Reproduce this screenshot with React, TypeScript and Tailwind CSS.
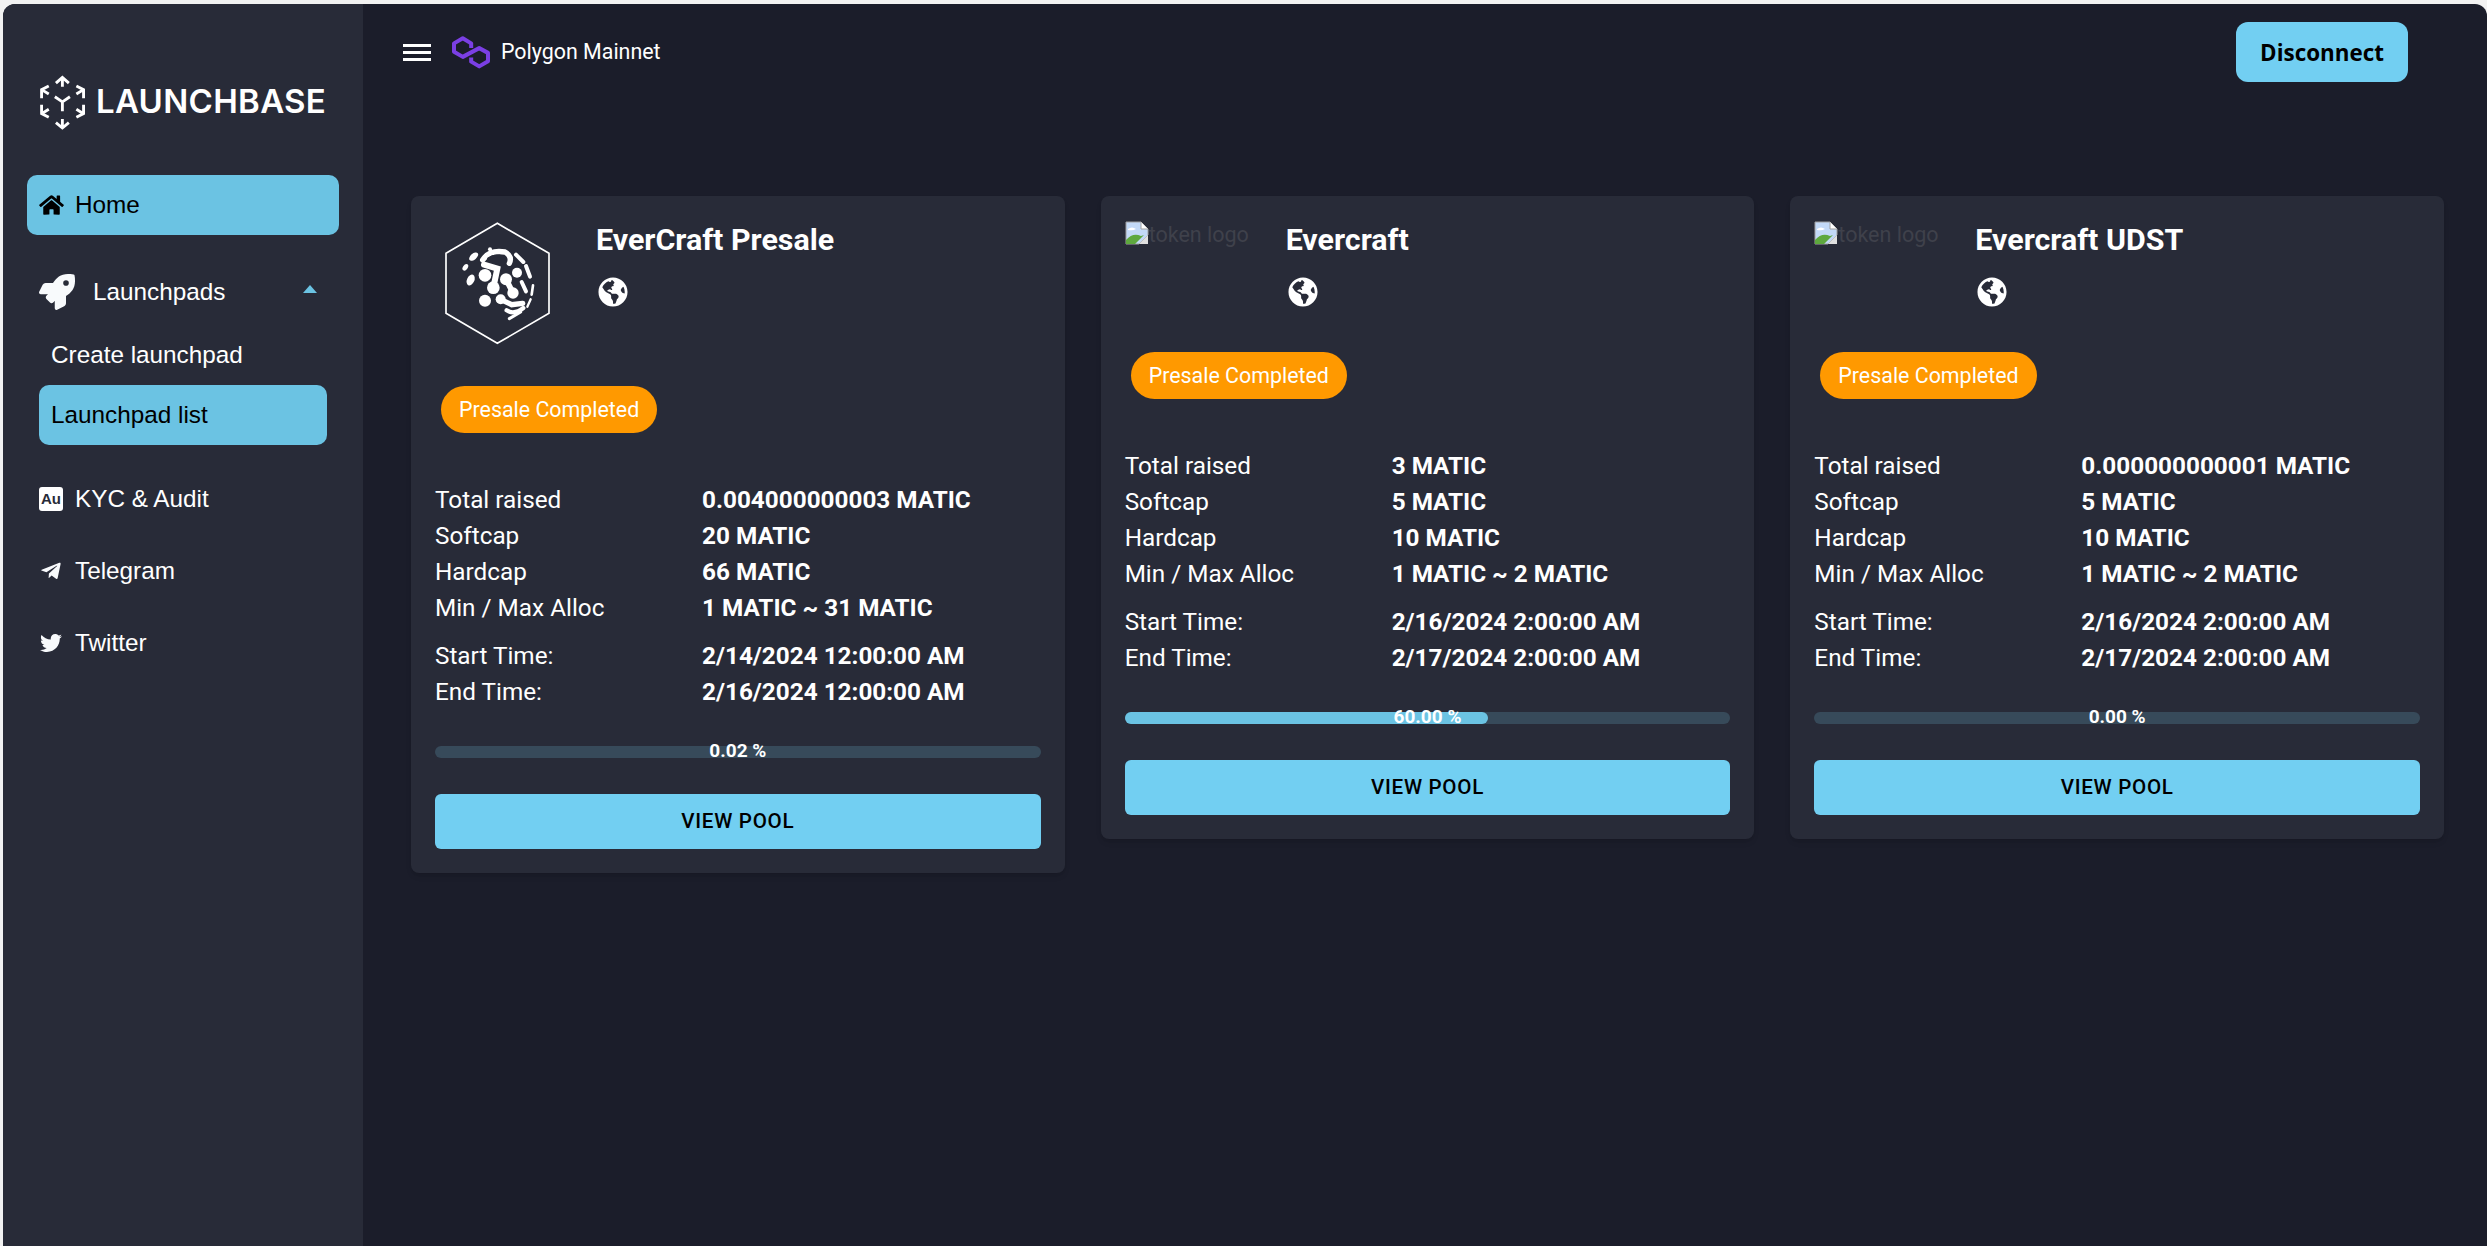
import React from "react";
import { FaHome, FaRocket, FaTelegramPlane, FaTwitter, FaGlobeAmericas } from "react-icons/fa";

const roboto = "font-['Roboto',sans-serif]";

function CubeLogo() {
  return (
    <svg viewBox="25 15 145 155" className="w-[52px] h-[56px] shrink-0" fill="none" stroke="white" strokeWidth="8" strokeLinejoin="miter">
      <path d="M93 92 L72 78 M93 92 L114 78 M93 92 V118" />
      <path d="M75 40 L93 24 L111 40 M93 24 V50" />
      <path d="M75 150 L93 165 L111 150 M93 165 V140" />
      <path d="M55 48 L35 58 V82 M35 58 L55 70" />
      <path d="M132 48 L152 58 V82 M152 58 L132 70" />
      <path d="M35 100 V125 L55 135 M35 125 L55 113" />
      <path d="M152 100 V125 L132 135 M152 125 L132 113" />
    </svg>
  );
}

function PolygonLogo() {
  return (
    <svg viewBox="170 22 115 100" className="w-[42px] h-[37px] shrink-0" fill="none" stroke="#7b3fe4" strokeWidth="11" strokeLinejoin="round">
      <path d="M228 60 V47 L205 33 L181 47 V70 L205 84 L250 60 L274 73 V96 L250 110 L228 97 V86" />
    </svg>
  );
}

function HexLogo() {
  return (
    <svg viewBox="0 15 360 375" className="w-[120px] h-[125px] ml-[5px] mt-[1px]" fill="white">
      <polygon points="172,22 327,112 327,292 172,382 18,292 18,112" fill="none" stroke="white" strokeWidth="5" />
      <ellipse cx="76" cy="154" rx="7" ry="11" transform="rotate(35 76 154)" />
      <ellipse cx="92" cy="192" rx="11" ry="17" transform="rotate(25 92 192)" />
      <ellipse cx="101" cy="122" rx="16" ry="9" transform="rotate(-40 101 122)" />
      <circle cx="135" cy="178" r="19" />
      <circle cx="135" cy="254" r="18" />
      <circle cx="231" cy="170" r="15" />
      <circle cx="198" cy="190" r="18" />
      <circle cx="160" cy="215" r="19" />
      <circle cx="219" cy="231" r="17" />
      <circle cx="182" cy="250" r="15" />
      <circle cx="150" cy="100" r="6" />
      <g fill="none" stroke="white" strokeLinecap="round">
        <path d="M160 215 L172 158 L132 146" strokeWidth="18" />
        <path d="M128 132 Q148 100 195 108 Q218 122 208 142" strokeWidth="16" />
        <path d="M146 128 Q162 116 186 122" strokeWidth="9" stroke="#282b38" />
        <path d="M198 190 L219 231" strokeWidth="17" />
        <path d="M182 250 L215 266 L248 262" strokeWidth="16" />
        <path d="M200 283 Q222 298 250 276" strokeWidth="13" />
        <path d="M208 308 L242 288" strokeWidth="9" />
        <path d="M228 116 L250 138" strokeWidth="12" />
        <path d="M258 150 L270 182" strokeWidth="12" />
        <path d="M245 198 L258 226" strokeWidth="12" />
        <path d="M279 208 L275 236" strokeWidth="8" />
        <path d="M272 250 L262 272" strokeWidth="7" />
      </g>
    </svg>
  );
}

function BrokenImage() {
  return (
    <svg viewBox="0 0 24 24" className="w-[24px] h-[24px] shrink-0 -translate-y-[2px]">
      <path d="M1 1 H16 L23 8 V14 L14 23 H1 Z" fill="#c3d9f7" stroke="#a0a0a0" strokeWidth="1" />
      <path d="M16 1 V8 H23" fill="#ffffff" stroke="#a0a0a0" strokeWidth="1" />
      <path d="M3 8 Q7 5 11 8 Q8 10 3 9 Z" fill="white" />
      <path d="M1 23 V19 Q8 11 16 15 L19 14 L10 23 Z" fill="#5ea83e" />
      <path d="M23 14 V23 H14 Z" fill="#e0e0e0" />
    </svg>
  );
}

function NavIconRow({ icon, label }: { icon: React.ReactNode; label: string }) {
  return (
    <div className="h-[60px] mx-[36px] flex items-center gap-[12px] text-white">
      <span className="w-[24px] flex justify-center shrink-0">{icon}</span>
      <span>{label}</span>
    </div>
  );
}

type Card = {
  name: string;
  logo: boolean;
  raised: string;
  soft: string;
  hard: string;
  alloc: string;
  start: string;
  end: string;
  pct: number;
  label: string;
};

const cards: Card[] = [
  { name: "EverCraft Presale", logo: true, raised: "0.004000000003 MATIC", soft: "20 MATIC", hard: "66 MATIC", alloc: "1 MATIC ~ 31 MATIC", start: "2/14/2024 12:00:00 AM", end: "2/16/2024 12:00:00 AM", pct: 0, label: "0.02 %" },
  { name: "Evercraft", logo: false, raised: "3 MATIC", soft: "5 MATIC", hard: "10 MATIC", alloc: "1 MATIC ~ 2 MATIC", start: "2/16/2024 2:00:00 AM", end: "2/17/2024 2:00:00 AM", pct: 60, label: "60.00 %" },
  { name: "Evercraft UDST", logo: false, raised: "0.000000000001 MATIC", soft: "5 MATIC", hard: "10 MATIC", alloc: "1 MATIC ~ 2 MATIC", start: "2/16/2024 2:00:00 AM", end: "2/17/2024 2:00:00 AM", pct: 0, label: "0.00 %" },
];

function Row({ k, v }: { k: string; v: string }) {
  return (
    <div className="flex h-[36px] items-center text-[24.3px] text-white">
      <span className="w-[267px] shrink-0 font-normal">{k}</span>
      <span className="font-bold">{v}</span>
    </div>
  );
}

function PoolCard({ c }: { c: Card }) {
  return (
    <div className={`bg-[#282b38] rounded-[8px] p-[24px] shadow-md ${roboto}`}>
      <div className={`flex ${c.logo ? "h-[134px]" : "h-[100px]"}`}>
        <div className="w-[161px] shrink-0">
          {c.logo ? (
            <HexLogo />
          ) : (
            <div className="flex items-center text-[21.5px] text-[#3f414b] h-[24px] mt-[3px]">
              <BrokenImage />
              <span>token logo</span>
            </div>
          )}
        </div>
        <div>
          <div className="text-[30.4px] font-bold text-white leading-[40px]">{c.name}</div>
          <FaGlobeAmericas className="text-white w-[30px] h-[30px] mt-[17px] ml-[2px]" />
        </div>
      </div>
      <div className="mt-[32px] ml-[6px] inline-flex h-[47px] items-center rounded-full bg-[#ff9900] px-[18px] pt-[2px] text-[21.4px] font-normal text-white">
        Presale Completed
      </div>
      <div className="mt-[49px]">
        <Row k="Total raised" v={c.raised} />
        <Row k="Softcap" v={c.soft} />
        <Row k="Hardcap" v={c.hard} />
        <Row k="Min / Max Alloc" v={c.alloc} />
      </div>
      <div className="mt-[12px]">
        <Row k="Start Time:" v={c.start} />
        <Row k="End Time:" v={c.end} />
      </div>
      <div className="relative mt-[36px] h-[12px] rounded-[6px] bg-[#374a5a]">
        <div className="h-full rounded-[6px] bg-[#6bc3e3]" style={{ width: `${c.pct}%` }} />
        <span className="absolute inset-x-0 top-[-7px] text-center text-[19px] leading-[24px] font-bold text-white">{c.label}</span>
      </div>
      <button className="mt-[36px] w-full h-[55px] rounded-[6px] bg-[#72cff2] text-[20.6px] font-medium tracking-[0.7px] text-black pb-[1px]">
        VIEW POOL
      </button>
    </div>
  );
}

export default function App() {
  return (
    <div className="h-[1246px] overflow-hidden bg-[#f2f2f2] pt-[4px] pl-[3px]">
      <div className="flex h-full rounded-t-[12px] overflow-hidden bg-[#1b1d2a]">
        <aside className="w-[360px] shrink-0 bg-[#282b38] font-['Liberation_Sans',sans-serif] text-[24.3px]">
          <div className="flex items-center gap-[6px] pl-[35px] pt-[72px] h-[171px] pb-[48px]">
            <CubeLogo />
            <span className="font-['Inter',sans-serif] text-[33px] font-semibold tracking-[0.3px] text-white">LAUNCHBASE</span>
          </div>
          <div className="mx-[24px] h-[60px] rounded-[10px] bg-[#6bc3e3] flex items-center gap-[11px] px-[12px] text-black">
            <FaHome className="w-[25px] h-[22px]" />
            <span>Home</span>
          </div>
          <div className="mt-[27px] h-[60px] mx-[36px] flex items-center text-white">
            <FaRocket className="w-[36px] h-[36px] text-[#f8fafc]" />
            <span className="ml-[18px] flex-1">Launchpads</span>
            <span className="w-0 h-0 mr-[10px] -translate-y-[3px] border-x-[7px] border-x-transparent border-b-[8px] border-b-[#6bc3e3]" />
          </div>
          <div className="h-[3px]" />
          <div className="mx-[36px] h-[60px] flex items-center px-[12px] text-white">Create launchpad</div>
          <div className="mx-[36px] h-[60px] rounded-[10px] bg-[#6bc3e3] flex items-center px-[12px] text-black">Launchpad list</div>
          <div className="mt-[24px] flex flex-col gap-[12px]">
            <NavIconRow
              label="KYC & Audit"
              icon={
                <span className="w-[24px] h-[24px] rounded-[3px] bg-white text-[#282b38] text-[15px] font-bold flex items-center justify-center">
                  Au
                </span>
              }
            />
            <NavIconRow label="Telegram" icon={<FaTelegramPlane className="w-[22px] h-[22px] text-[#f8fafc]" />} />
            <NavIconRow label="Twitter" icon={<FaTwitter className="w-[25px] h-[22px] text-[#f8fafc]" />} />
          </div>
        </aside>
        <main className="flex-1 min-w-0">
          <header className={`mt-[18px] h-[60px] flex items-center justify-between pl-[40px] pr-[79px] ${roboto}`}>
            <div className="flex items-center text-white">
              <div className="w-[28px] flex flex-col gap-[4px]">
                <span className="h-[3px] bg-white" />
                <span className="h-[3px] bg-white" />
                <span className="h-[3px] bg-white" />
              </div>
              <span className="ml-[19px]"><PolygonLogo /></span>
              <span className="ml-[9px] text-[21.4px] font-normal">Polygon Mainnet</span>
            </div>
            <button className="w-[172px] h-[60px] rounded-[12px] bg-[#72cff2] pt-[2px] font-['Open_Sans',sans-serif] text-[22.4px] font-bold text-black">
              Disconnect
            </button>
          </header>
          <div className="mt-[114px] ml-[48px] mr-[43px] grid grid-cols-3 gap-[36px] items-start">
            {cards.map((c) => (
              <PoolCard key={c.name} c={c} />
            ))}
          </div>
        </main>
      </div>
    </div>
  );
}
